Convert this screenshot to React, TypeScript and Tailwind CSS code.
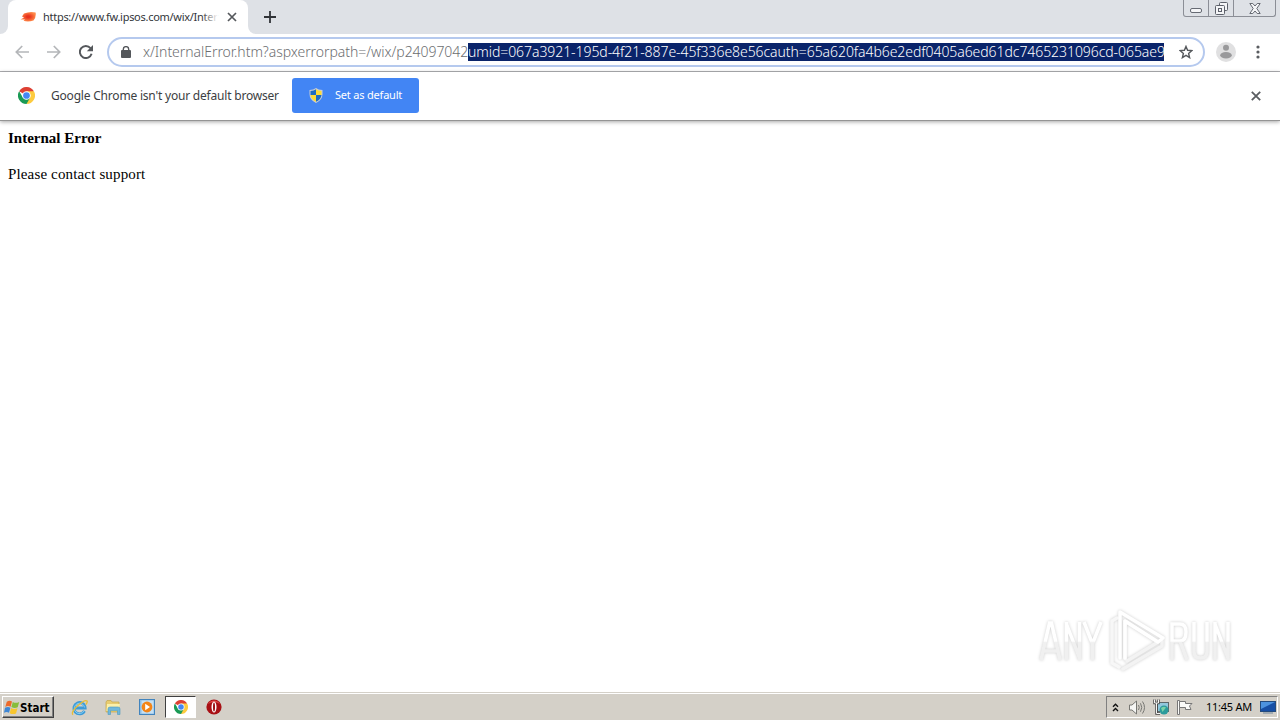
import type { ReactNode } from 'react'

const SELECTED = 'umid=067a3921-195d-4f21-887e-45f336e8e56cauth=65a620fa4b6e2edf0405a6ed61dc7465231096cd-065ae9'

function ChromeLogo({ size }: { size: number }) {
  return (
    <svg width={size} height={size} viewBox="0 0 48 48">
      <path d="M24 24 L3.2 12 A24 24 0 0 1 44.8 12 Z" fill="#dd4033" />
      <path d="M24 24 L44.8 12 A24 24 0 0 1 24 48 Z" fill="#fdcb3f" />
      <path d="M24 12 H44.8 L34 30 Z" fill="#fdcb3f" />
      <path d="M14 30 L3.2 12 A24 24 0 0 0 24 48 L34 30 Z" fill="#1a9a55" />
      <circle cx="24" cy="24" r="12" fill="#fff" />
      <circle cx="24" cy="24" r="9.5" fill="#4587f3" />
    </svg>
  )
}

function TabStrip() {
  return (
    <div className="relative flex h-[34px] shrink-0 bg-[#dee1e6]">
      <div className="h-full w-2 bg-white">
        <div className="h-full w-2 rounded-br-lg bg-[#dee1e6]" />
      </div>
      <div className="flex h-full w-[240px] items-center rounded-t-lg bg-white pl-3">
        <svg width="16" height="12" viewBox="0 0 16 12" className="shrink-0">
          <defs>
            <radialGradient id="fav">
              <stop offset="0.2" stopColor="#e8321c" />
              <stop offset="1" stopColor="#ff8a4a" />
            </radialGradient>
          </defs>
          <path d="M4 2.5 Q10 0 15.6 1.5 Q16.4 6 13.5 9.5 Q8 11.5 3.5 9.8 L5 8.6 L.5 8.4 L4 6.6 L2 5.4 Z" fill="url(#fav)" />
        </svg>
        <div className="relative ml-[7px] w-[175px] whitespace-nowrap text-[11px] leading-4 tracking-[-0.28px] text-[#33363a]">
          https://www.fw.ipsos.com/wix/Inter
          <div className="absolute inset-y-0 right-0 w-4 bg-linear-to-r from-transparent to-white" />
        </div>
        <svg width="10" height="10" viewBox="0 0 10 10" className="ml-[9px]" stroke="#55585c" strokeWidth="1.7">
          <path d="M1 1 L9 9 M9 1 L1 9" />
        </svg>
      </div>
      <div className="h-full w-2 bg-white">
        <div className="h-full w-2 rounded-bl-lg bg-[#dee1e6]" />
      </div>
      <svg width="12" height="12" viewBox="0 0 12 12" className="ml-2 mt-[11px]" stroke="#303338" strokeWidth="1.8">
        <path d="M6 0 V12 M0 6 H12" />
      </svg>
      <div className="ml-auto mr-1 flex h-[17px] w-[93px] rounded-b-[3px] border border-t-0 border-[#8b8e96]">
        <div className="flex w-[25px] justify-center border-r border-[#8b8e96] pt-2">
          <div className="h-[5px] w-3 rounded-[2px] border border-[#666a73] bg-[#f4f5f7]" />
        </div>
        <div className="flex w-[25px] justify-center border-r border-[#8b8e96] pt-[2px]">
          <svg width="13" height="13" viewBox="0 0 13 13" fill="#f4f5f7" stroke="#5d616b">
            <rect x="4.5" y=".5" width="8" height="8" rx="1" />
            <rect x=".5" y="3.5" width="9" height="9" rx="1" />
            <rect x="3.5" y="6.5" width="3" height="3" />
          </svg>
        </div>
        <div className="flex flex-1 justify-center pt-[3px]">
          <svg width="12" height="11" viewBox="0 0 12 11" fill="#f4f5f7" stroke="#666a73">
            <path d="M.8.5 H3.8 L6 3 L8.2.5 H11.2 L7.8 5.5 L11.2 10.5 H8.2 L6 8 L3.8 10.5 H.8 L4.2 5.5 Z" />
          </svg>
        </div>
      </div>
    </div>
  )
}

function Toolbar() {
  return (
    <div className="flex h-[38px] shrink-0 items-center border-b border-[#b0b1b4] bg-white pb-[2px]">
      <svg width="14" height="14" viewBox="0 0 14 14" className="ml-[15px]" fill="none" stroke="#b4b6b9" strokeWidth="1.7">
        <path d="M14 7 H1.5 M7.2 1 L1.3 7 L7.2 13" />
      </svg>
      <svg width="14" height="14" viewBox="0 0 14 14" className="ml-[18px]" fill="none" stroke="#b4b6b9" strokeWidth="1.7">
        <path d="M0 7 H12.5 M6.8 1 L12.7 7 L6.8 13" />
      </svg>
      <svg width="14" height="14" viewBox="0 0 14 14" className="ml-[18px]" fill="none" stroke="#55585c" strokeWidth="2">
        <path d="M11.5 3.2 A6 6 0 1 0 12.6 8.8" />
        <path d="M14 0 V6.2 H7.8 Z" fill="#55585c" stroke="none" />
      </svg>
      <div className="ml-[14px] flex h-[30px] w-[1098px] items-center rounded-full border-2 border-[#b5c9ee] bg-white pl-3">
        <svg width="10" height="12" viewBox="0 0 10 12" className="shrink-0">
          <rect x="0" y="4" width="10" height="8" rx="1" fill="#54575b" />
          <path d="M2.3 5 V3.3 A2.7 2.7 0 0 1 7.7 3.3 V5" fill="none" stroke="#54575b" strokeWidth="1.4" />
        </svg>
        <div className="ml-3 flex whitespace-nowrap text-[14px] font-light leading-[18px]">
          <span className="w-[325px] shrink-0 tracking-[-0.05px] text-[#6c6e71]">x/InternalError.htm?aspxerrorpath=/wix/p24097042</span>
          <span className="w-[696px] shrink-0 bg-[#0a246a] tracking-[-0.065px] text-white">{SELECTED}</span>
        </div>
        <svg width="14" height="14" viewBox="0 0 14 14" className="ml-[15px] shrink-0" fill="none" stroke="#55585c" strokeWidth="1.4">
          <path d="M7 1.4 L8.6 5.3 L12.9 5.6 L9.6 8.4 L10.6 12.6 L7 10.3 L3.4 12.6 L4.4 8.4 L1.1 5.6 L5.4 5.3 Z" />
        </svg>
      </div>
      <svg width="20" height="20" viewBox="0 0 20 20" className="ml-[11px]">
        <circle cx="10" cy="10" r="10" fill="#e0e0e1" />
        <circle cx="10" cy="5.8" r="3" fill="#99999b" />
        <ellipse cx="10" cy="13.2" rx="5.8" ry="3.2" fill="#99999b" />
      </svg>
      <svg width="4" height="14" viewBox="0 0 4 14" className="ml-[20px]" fill="#5a5d61">
        <circle cx="2" cy="2" r="1.6" />
        <circle cx="2" cy="7" r="1.6" />
        <circle cx="2" cy="12" r="1.6" />
      </svg>
    </div>
  )
}

function InfoBar() {
  return (
    <div className="z-10 flex h-[49px] shrink-0 items-center border-b border-[#949494] bg-white pb-px pl-[18px] shadow-[0_1px_4px_rgba(0,0,0,0.35)]">
      <ChromeLogo size={17} />
      <span className="ml-4 w-[241px] whitespace-nowrap text-[12px] leading-4 tracking-[-0.2px] text-[#3c3e42]">
        Google Chrome isn't your default browser
      </span>
      <button className="flex h-[35px] w-[127px] items-center rounded-[3px] bg-[#4285f4] pl-[17px] text-[11px] text-white">
        <svg width="14" height="15" viewBox="0 0 14 15" className="mr-3 shrink-0">
          <path d="M7 0 Q9.5 2 13.5 2 V6 Q13.5 12 7 15 Q.5 12 .5 6 V2 Q4.5 2 7 0" fill="#c9ced6" />
          <path d="M7 1.2 V7 H1.5 V3 Q5 2.8 7 1.2" fill="#1f6cc0" />
          <path d="M7 1.2 Q9 2.8 12.5 3 V7 H7 Z" fill="#fddb35" />
          <path d="M1.5 7 H7 V13.8 Q2 11.5 1.5 7" fill="#fddb35" />
          <path d="M7 7 H12.5 Q12 11.5 7 13.8 Z" fill="#1f6cc0" />
        </svg>
        <span className="whitespace-nowrap tracking-[-0.2px]">Set as default</span>
      </button>
      <svg width="10" height="10" viewBox="0 0 10 10" className="ml-auto mr-[19px]" stroke="#5a5d61" strokeWidth="1.8">
        <path d="M.8.8 L9.2 9.2 M9.2.8 L.8 9.2" />
      </svg>
    </div>
  )
}

function Watermark() {
  return (
    <svg width="204" height="70" viewBox="0 0 204 70" className="drop-shadow-[0_0_1.5px_rgba(0,0,0,0.2)]">
      <defs>
        <linearGradient id="wm" gradientUnits="userSpaceOnUse" x1="0" y1="14" x2="0" y2="54">
          <stop offset="0.5" stopColor="#fff" />
          <stop offset="0.54" stopColor="#f0f0f0" />
        </linearGradient>
      </defs>
      <g fill="none" stroke="url(#wm)" strokeWidth="3.5">
        <path d="M8 53 L16.5 16 H18.5 L27 53 M11 44 H24" />
        <path d="M33.5 53 V15 M33.5 17 L46.5 51 M46.5 53 V15" />
        <path d="M51 15 L59.5 37 L68 15 M59.5 36 V53" />
        <path d="M139 53 V17 H147 Q153 17 153 25 Q153 34 147 34 H139 M147 34 L154 53" />
        <path d="M161 15 V45 Q161 51 167.5 51 Q174 51 174 45 V15" />
        <path d="M182 53 V15 M182 17 L195 51 M195 53 V15" />
      </g>
      <g fill="none" strokeWidth="3.5" strokeLinejoin="round" strokeLinecap="round">
        <path d="M90 62 L129 39 V34" stroke="#f3f3f3" />
        <path d="M79 56 V14 L84 11 M79 56 L86 60" stroke="#f7f7f7" />
        <path d="M92 52 V14 L125 35 L94 54" stroke="#f3f3f3" />
        <path d="M87 51 V5 L130 31 L125 35 L92 14 V51" stroke="#fff" />
      </g>
    </svg>
  )
}

function TrayIcons() {
  return (
    <>
      <svg width="7" height="9" viewBox="0 0 7 9" fill="none" stroke="#111" strokeWidth="1.4">
        <path d="M1 3.7 L3.5 1.2 L6 3.7 M1 8 L3.5 5.5 L6 8" />
      </svg>
      <svg width="17" height="15" viewBox="0 0 17 15" fill="none" stroke="#777773" className="ml-[10px]">
        <path d="M.5 5 H3 L7.5 1 V14 L3 10 H.5 Z" fill="#f6f6f4" />
        <path d="M9.5 5 Q11 7.5 9.5 10 M11.5 3.3 Q14 7.5 11.5 11.7 M13.5 1.5 Q17.5 7.5 13.5 13.5" />
      </svg>
      <svg width="16" height="16" viewBox="0 0 16 16" fill="none" className="ml-[7px]">
        <rect x="4.5" y="3.5" width="11" height="9" fill="#92c8dd" stroke="#5d686b" />
        <path d="M1.5.5 V4 H5.5 V.5 M3.5 4 V14.5 H7" stroke="#444" strokeWidth="2.4" />
        <path d="M1.5.5 V4 H5.5 V.5 M3.5 4 V14.5 H7" stroke="#f5f5f2" />
        <circle cx="11" cy="11" r="4.5" fill="#2b9b9c" />
        <path d="M8 9 Q11 6.8 13 8.5 L9.5 13 Z" fill="#7cd2a6" />
      </svg>
      <svg width="16" height="15" viewBox="0 0 16 15" fill="#fbfbf9" stroke="#777" className="ml-2">
        <path d="M.5.5 H2.5 V14.5 H.5 Z" />
        <path d="M2.5 1.5 H8.5 V3.5 H15 L12.5 6 L14 9.5 H8.5 V7.5 H2.5 Z" />
      </svg>
    </>
  )
}

function TaskItem({ children }: { children: ReactNode }) {
  return <div className="flex h-[22px] w-[34px] items-center justify-center">{children}</div>
}

function Taskbar() {
  return (
    <div className="flex h-[28px] shrink-0 border-t border-[#d4d0c8] bg-[#d4d0c8] shadow-[inset_0_1px_0_#fff]">
      <div className="ml-0.5 mt-[3px] flex h-[22px] w-[52px] items-center border border-b-[#404040] border-l-white border-r-[#404040] border-t-white pl-px shadow-[inset_-1px_-1px_0_#808080]">
        <svg width="16" height="15" viewBox="0 0 16 15" className="shrink-0">
          <path d="M2.8 1.7 Q5.5 0 8 1.5 L6.6 6.8 Q4 5.3 1.3 6.9 Z" fill="#ec6a2c" />
          <path d="M8.8 2 Q11.5 3.7 15.2 2 L13.7 7.3 Q10.5 8.7 7.4 7.1 Z" fill="#87bd3c" />
          <path d="M1 7.8 Q4 6.3 6.4 7.7 L5 12.7 Q2.5 11.4 0 12.8 Z" fill="#3e87d5" />
          <path d="M7.1 8.1 Q10 9.7 13.5 8.3 L12 13.4 Q9 14.8 5.7 13.2 Z" fill="#f8c62e" />
        </svg>
        <span className="whitespace-nowrap pt-px font-['DejaVu_Sans_Condensed','DejaVu_Sans',sans-serif] text-[11.5px] font-bold leading-4 font-stretch-condensed text-black">Start</span>
      </div>
      <div className="ml-2 mt-[3px] flex">
        <TaskItem>
          <svg width="17" height="17" viewBox="0 0 17 17" fill="none">
            <path d="M13.5 12 A5.7 5.7 0 1 1 14.2 9 H4" stroke="#3d9bd8" strokeWidth="2.8" />
            <path d="M13.2 11.6 A5.2 5.2 0 1 1 13.6 8.5" stroke="#86cdf0" />
            <path d="M2 15.8 Q-.5 13 7 6.5 Q14 .3 16 2 Q16.8 3 14.8 5.5" stroke="#e8bd35" strokeWidth="1.3" />
          </svg>
        </TaskItem>
        <TaskItem>
          <svg width="16" height="16" viewBox="0 0 16 16">
            <path d="M1 3 L2 1.5 H6 L7 3 H14 V13 H1 Z" fill="#e8cc70" stroke="#c4a64c" strokeWidth=".7" />
            <path d="M2 5 H15 L14 12 H1.5 Z" fill="#fbf0aa" />
            <path d="M3 15.5 V10 Q3 8 5 8 H13 Q15 8 15 10 V15.5 H12.5 V11.5 H5.5 V15.5 Z" fill="#70b8dc" stroke="#4d98bd" strokeWidth=".6" />
          </svg>
        </TaskItem>
        <TaskItem>
          <svg width="16" height="16" viewBox="0 0 16 16">
            <rect x=".5" y=".5" width="15" height="15" fill="#8dbfe7" stroke="#4284bd" />
            <rect x="2.5" y="1.5" width="12" height="13" fill="#c5e0f3" />
            <circle cx="8" cy="8" r="5.4" fill="#f38518" />
            <path d="M6.2 4.8 L11 8 L6.2 11.2 Z" fill="#fff" />
          </svg>
        </TaskItem>
        <div className="ml-px flex h-[22px] w-[31px] items-center justify-center border border-b-white border-l-[#404040] border-r-white border-t-[#404040] bg-white">
          <ChromeLogo size={14} />
        </div>
        <div className="ml-px">
          <TaskItem>
            <svg width="16" height="16" viewBox="0 0 16 16">
              <circle cx="8" cy="8" r="7.6" fill="#a81015" />
              <path d="M2 5 A7 7 0 0 1 14 5 Q8 1 2 5" fill="#e04a48" />
              <ellipse cx="8" cy="8" rx="2.5" ry="5.6" fill="#fff" />
              <ellipse cx="8" cy="8" rx="1" ry="4.6" fill="#9c1015" />
            </svg>
          </TaskItem>
        </div>
      </div>
      <div className="ml-auto mr-0.5 mt-[3px] flex h-[22px] w-[172px] items-center border border-b-white border-l-[#808080] border-r-white border-t-[#808080] pl-[5px]">
        <TrayIcons />
        <span className="ml-[13px] w-[47px] whitespace-nowrap text-[11px] leading-4 tracking-[-0.25px] text-black">11:45 AM</span>
        <svg width="16" height="13" viewBox="0 0 16 13" className="ml-[7px] shrink-0">
          <rect x=".5" y=".5" width="15" height="10" fill="#174fa5" stroke="#244b7d" />
          <path d="M1 1 H15 L1 8 Z" fill="#4d93df" />
          <path d="M3 12 H13" stroke="#70869c" />
        </svg>
      </div>
    </div>
  )
}

export default function App() {
  return (
    <div className="flex h-[720px] w-[1280px] flex-col overflow-hidden bg-white font-['Noto_Sans','Open_Sans',sans-serif]">
      <TabStrip />
      <Toolbar />
      <InfoBar />
      <main className="relative flex-1 pl-2 pt-2 font-['Liberation_Serif',serif] leading-[18px] text-black">
        <h1 className="text-[15px] font-bold">Internal Error</h1>
        <p className="mt-[18px] text-[15px] tracking-[0.15px]">Please contact support</p>
        <div className="absolute bottom-[15px] right-[43px]">
          <Watermark />
        </div>
      </main>
      <Taskbar />
    </div>
  )
}
